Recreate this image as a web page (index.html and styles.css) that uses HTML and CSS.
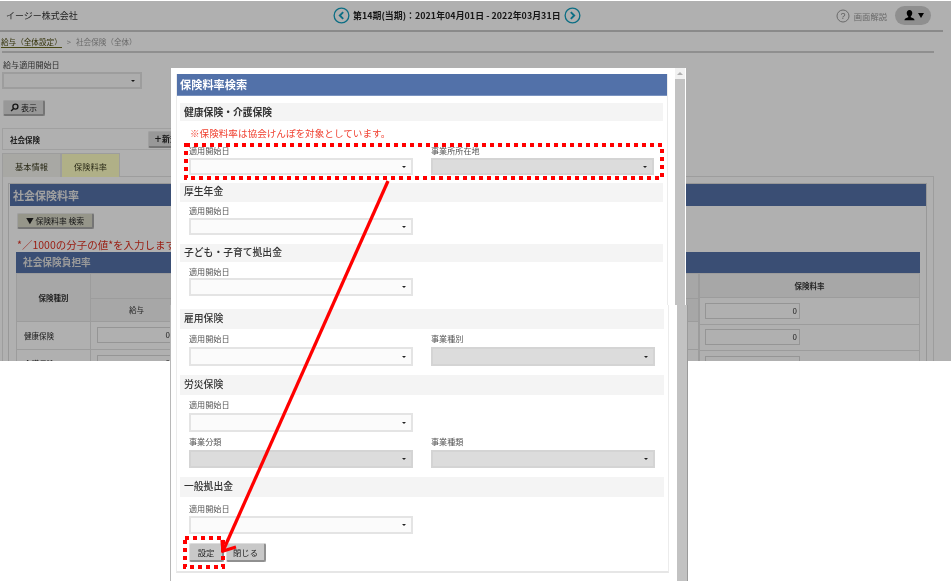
FILE: index.html
```html
<!DOCTYPE html>
<html lang="ja">
<head>
<meta charset="utf-8">
<title>保険料率検索</title>
<link rel="stylesheet" href="styles.css">
</head>
<body>
<div class="app">
  <div class="screen">
    <header class="topbar">
      <div class="company">イージー株式会社</div>
      <div class="period">
        <svg class="nav" viewBox="0 0 18 18"><circle cx="9" cy="9" r="7.8"/><path d="M10.8 5.4 7.2 9l3.6 3.6"/></svg>
        <span>第14期(当期)：2021年04月01日 - 2022年03月31日</span>
        <svg class="nav" viewBox="0 0 18 18"><circle cx="9" cy="9" r="7.8"/><path d="M7.2 5.4 10.8 9l-3.6 3.6"/></svg>
      </div>
      <div class="tools">
        <svg class="help" viewBox="0 0 14 14"><circle cx="7" cy="7" r="6"/><text x="7" y="10" text-anchor="middle">?</text></svg>
        <span class="help-text">画面解説</span>
        <div class="user">
          <svg viewBox="0 0 14 14" class="user-icon"><path d="M7 1c2 0 3 1.500 3 3.400 0 1.500-.8 2.800-1.600 3.400v1c1.700.6 3.800 1.200 4.100 3.200H1.500c.3-2 2.400-2.600 4.100-3.200v-1C4.800 7.200 4 5.900 4 4.400 4 2.500 5 1 7 1z"/></svg>
          <span class="user-caret"></span>
        </div>
      </div>
    </header>

    <nav class="crumb"><a>給与（全体設定）</a><span class="sep">&gt;</span><span>社会保険（全体）</span></nav>

    <div class="filter">
      <div class="filter-label">給与適用開始日</div>
      <div class="sel filter-sel"><i></i></div>
      <button class="btn show-btn"><svg viewBox="0 0 10 10" class="loupe"><circle cx="6" cy="4" r="2.800"/><path d="M4 6 1.200 8.800"/></svg>表示</button>
    </div>

    <div class="card"><span class="card-title">社会保険</span><button class="btn add-btn"><b>＋</b>新規</button></div>

    <div class="tabs"><div class="tab">基本情報</div><div class="tab tab-on">保険料率</div></div>

    <section class="panel">
      <div class="panel-box">
        <h2 class="panel-head">社会保険料率</h2>
        <button class="btn rate-btn">▼ 保険料率 検索</button>
        <p class="hint">*／1000の分子の値*を入力します</p>
        <h3 class="sub-head">社会保険負担率</h3>
        <div class="tables">
          <table class="tbl tbl-left">
            <colgroup><col class="c1"><col class="c2"><col></colgroup>
            <tr class="r1"><th rowspan="2">保険種別</th><th colspan="2"></th></tr>
            <tr class="r2"><th class="th-plain">給与</th><th></th></tr>
            <tr class="r3"><td class="lab">健康保険</td><td colspan="2"><div class="num num-l">0</div></td></tr>
            <tr class="r3"><td class="lab">介護保険</td><td colspan="2"><div class="num num-l">0</div></td></tr>
          </table>
          <table class="tbl tbl-right">
            <tr class="r1"><th>保険料率</th></tr>
            <tr class="r4"><td><div class="num">0</div></td></tr>
            <tr class="r4"><td><div class="num">0</div></td></tr>
            <tr class="r4"><td><div class="num">0</div></td></tr>
          </table>
        </div>
      </div>
    </section>
    <div class="dim"></div>
  </div>

  <div class="modal">
    <div class="frag frag-top">
      <div class="inner">
        <h1 class="modal-title">保険料率検索</h1>
        <div class="modal-body">
          <div class="bar bar-a">健康保険・介護保険</div>
          <p class="note">※保険料率は協会けんぽを対象としています。</p>
          <div class="pair p-a">
            <div class="field"><label>適用開始日</label><div class="sel s17"><i></i></div></div>
            <div class="field f-narrow"><label>事業所所在地</label><div class="sel s17 off"><i></i></div></div>
          </div>
          <div class="bar bar-b">厚生年金</div>
          <div class="pair p-b"><div class="field"><label>適用開始日</label><div class="sel s17"><i></i></div></div></div>
          <div class="bar bar-c">子ども・子育て拠出金</div>
          <div class="pair p-c"><div class="field"><label>適用開始日</label><div class="sel s18"><i></i></div></div></div>
        </div>
      </div>
      <div class="scroll"><span class="scroll-up"></span></div>
    </div>

    <div class="frag frag-bottom">
      <div class="inner inner-b">
        <div class="modal-body">
          <div class="bar bar-d">雇用保険</div>
          <div class="pair p-d">
            <div class="field"><label>適用開始日</label><div class="sel s19"><i></i></div></div>
            <div class="field"><label>事業種別</label><div class="sel s19 off"><i></i></div></div>
          </div>
          <div class="bar bar-d bar-e">労災保険</div>
          <div class="pair p-d"><div class="field"><label>適用開始日</label><div class="sel s19"><i></i></div></div></div>
          <div class="pair p-f">
            <div class="field"><label>事業分類</label><div class="sel s18 off"><i></i></div></div>
            <div class="field"><label>事業種類</label><div class="sel s18 off"><i></i></div></div>
          </div>
          <div class="bar bar-d bar-g">一般拠出金</div>
          <div class="pair p-g"><div class="field"><label>適用開始日</label><div class="sel s18"><i></i></div></div></div>
          <div class="actions"><button class="btn act-set">設定</button><button class="btn act-close">閉じる</button></div>
        </div>
      </div>
      <div class="scroll scroll-b"></div>
    </div>
  </div>

  <svg class="marks" viewBox="0 0 951 581">
    <rect class="dots" x="186" y="145" width="476" height="33"/>
    <rect class="dots" x="185" y="538" width="38" height="29"/>
    <path class="arrow" d="M388 181 223 551"/>
    <path class="arrow" d="M222 540 223 551 236 547"/>
  </svg>
</div>
</body>
</html>
```
FILE: styles.css
```css
* { box-sizing: border-box; }
html, body { margin: 0; padding: 0; background: #fff; }
body { font-family: "Noto Sans CJK JP", "Liberation Sans", sans-serif; color: #2c2c2c; }
h1, h2, h3, p { margin: 0; font-weight: inherit; }
button { font-family: inherit; padding: 0; }

.app { position: relative; width: 951px; height: 581px; overflow: hidden; filter: blur(.35px); }

.screen { position: relative; height: 361px; overflow: hidden; background: #fff; border-top: 1px solid #fff; }
.dim { position: absolute; inset: 0; background: rgba(0, 0, 0, .31); }

.topbar { display: flex; align-items: center; height: 31px; border-bottom: 2px solid #c8c8c8; width: 943px; }
.company { font-size: 9px; margin-left: 6px; width: 327px; color: #333; }
.period { display: flex; align-items: center; gap: 3px; font-size: 8.900px; font-weight: 700; color: #222; white-space: nowrap; }
.period span { letter-spacing: .05px; }
.nav { width: 17px; height: 17px; fill: none; stroke: #12a0c0; stroke-width: 1.400; }
.nav path { stroke-width: 2; }
.tools { display: flex; align-items: center; margin-left: auto; margin-right: 12px; }
.help { width: 14px; height: 14px; fill: none; stroke: #9a9a9a; stroke-width: 1; }
.help text { fill: #888; stroke: none; font-size: 9px; font-family: "Liberation Sans", sans-serif; }
.help-text { font-size: 8.300px; color: #999; margin-left: 4px; }
.user { display: flex; align-items: center; justify-content: center; gap: 2px; width: 36px; height: 19px; border-radius: 10px; background: #d0d0d0; margin-left: 8px; }
.user-icon { width: 13px; height: 13px; fill: #000; }
.user-caret { border: 3.500px solid transparent; border-top: 5px solid #000; border-bottom: 0; }

.crumb { display: flex; align-items: center; gap: 4px; height: 21px; width: 932px; margin-left: 2px; border-bottom: 2px solid #cfcfcf; font-size: 7.600px; color: #9a9a9a; }
.crumb a { color: #4c4a10; border-bottom: 1px solid #6b691e; margin-left: -1px; }
.sep { margin: 0 1px; }

.filter { padding: 6px 0 0 2px; }
.filter-label { font-size: 8.100px; height: 13px; line-height: 11px; margin-left: 1px; color: #444; }
.filter-sel { width: 140px; height: 17px; }
.show-btn { display: flex; align-items: center; justify-content: center; gap: 2px; width: 42px; height: 16px; margin: 11px 0 0 1px; font-size: 8px; }
.loupe { width: 9px; height: 9px; fill: none; stroke: #222; stroke-width: 1.500; }

.sel { position: relative; background: #fbfbfb; border: 2px solid #e4e4e4; }
.sel i { position: absolute; right: 5px; top: 50%; margin-top: -1px; border: 2px solid transparent; border-top: 2.500px solid #222; border-bottom: 0; }
.sel.off { background: #dcdcdc; border-color: #d4d4d4; }
.s17 { height: 17px; }
.s18 { height: 18px; }
.s19 { height: 19px; }

.btn { background: #dcdcdc; border: 1px solid #e8e8e8; border-right: 2px solid #aaa; border-bottom: 2px solid #aaa; border-radius: 2px; color: #222; }

.card { display: flex; align-items: center; width: 300px; height: 22px; margin: 12px 0 0 2px; border: 1px solid #e8e8e8; font-size: 7.500px; font-weight: 700; }
.card-title { margin-left: 7px; width: 138px; }
.add-btn { width: 60px; height: 17px; font-size: 8px; font-weight: 700; text-align: left; padding-left: 5px; }
.add-btn b { font-size: 8px; }

.tabs { display: flex; margin: 3px 0 0 2px; height: 24px; }
.tab { width: 59px; height: 24px; display: flex; align-items: center; justify-content: center; font-size: 8.200px; background: #f4f4ee; border: 1px solid #e4e4e4; border-bottom: 0; color: #3c3c20; }
.tab-on { background: #ffffc4; }

.panel { width: 932px; height: 200px; margin: -1px 0 0 2px; border: 1px solid #e4e4e4; padding: 6px 6px 0 5px; }
.panel-box { height: 200px; border: 1px solid #dcdcdc; border-bottom: 0; }
.panel-head { height: 22px; line-height: 22px; background: #5471a8; color: #e8e8e8; font-size: 11px; font-weight: 700; padding-left: 3px; margin-left: 1px; }
.rate-btn { display: block; width: 77px; height: 16px; margin: 7px 0 0 8px; font-size: 7.800px; background: #d9d9c8; white-space: nowrap; }
.hint { font-size: 10.500px; line-height: 14px; color: #e03020; margin: 9px 0 0 8px; white-space: nowrap; }
.sub-head { height: 21px; line-height: 21px; width: 904px; margin-left: 7px; background: #5471a8; color: #e0e0e0; font-size: 9.700px; font-weight: 700; padding-left: 7px; }

.tables { display: flex; width: 904px; margin-left: 7px; }
.tbl { border-collapse: collapse; table-layout: fixed; font-size: 7.500px; }
.tbl th, .tbl td { border: 1px solid #e2e2e2; padding: 0; text-align: center; font-weight: 400; }
.tbl th { background: #f2f2f2; font-weight: 700; color: #333; }
.tbl th.th-plain { font-weight: 400; }
.tbl-left { width: 683px; flex: none; }
.tbl-right { width: 221px; flex: none; }
.c1 { width: 74px; }
.c2 { width: 92px; }
.r1 { height: 24px; }
.r2 { height: 23px; }
.r3 { height: 27px; }
.r4 { height: 26.500px; }
.tbl td.lab { background: #fff; text-align: left; padding-left: 7px; }
.num { width: 95px; height: 16px; margin-left: 5px; border: 1px solid #d8d8d8; text-align: right; padding-right: 2px; font-size: 8px; line-height: 14px; color: #333; background: #fff; }
.num-l { width: 76px; margin-left: 6px; }

.modal { position: absolute; left: 171px; top: 68px; width: 518px; height: 513px; display: grid; grid-template-rows: 237px 276px; }
.frag { display: flex; background: #fff; }
.frag-top { width: 515px; padding: 6px 0 0 5px; }
.frag-bottom { width: 518px; padding-left: 5px; border-left: 1px solid #b8b8b8; border-right: 1px solid #9a9a9a; margin-left: -1px; }
.inner { width: 492px; border-left: 1px solid #ececec; border-right: 1px solid #ececec; flex: none; }
.inner-b { width: 493px; height: 268px; border-bottom: 2px solid #e6e6e6; }
.modal-title { height: 22px; line-height: 21px; background: #5271a9; color: #fff; font-size: 11.200px; font-weight: 700; padding-left: 3px; border-bottom: 1px solid #7a93c0; }
.modal-body { padding-left: 3px; }

.bar { width: 483px; padding-left: 4px; background: #f4f4f4; font-size: 9.800px; font-weight: 500; color: #333; }
.bar-a { height: 18px; line-height: 18px; margin-top: 7px; font-weight: 700; }
.bar-b { height: 19px; line-height: 17px; margin-top: 8px; }
.bar-c { height: 18px; line-height: 17px; margin-top: 9px; }
.bar-d { width: 484px; height: 20px; line-height: 19px; margin-top: 4px; }
.bar-e { margin-top: 9px; }
.bar-g { margin-top: 9px; }
.note { font-size: 9.600px; line-height: 12px; margin: 6px 0 0 10px; color: #f04030; white-space: nowrap; }

.pair { display: flex; gap: 18px; margin-left: 9px; }
.field { width: 224px; flex: none; }
.f-narrow { width: 223px; }
.field label { display: block; height: 11px; line-height: 10px; font-size: 8.100px; color: #555; margin: 0 0 1px 0; }
.p-a { margin-top: 7px; }
.p-b { margin-top: 4px; }
.p-c { margin-top: 5px; }
.p-c label { margin-bottom: 0; }
.p-d { margin-top: 5px; }
.p-d label { margin-bottom: 2px; }
.p-f { margin-top: 5px; }
.p-f label { margin-bottom: 2px; }
.p-g { margin-top: 7px; }

.actions { display: flex; gap: 2px; margin: 9px 0 0 9px; }
.act-set, .act-close { height: 19px; font-size: 8.300px; background: #c8c8c8; border-color: #ddd #909090 #909090 #ddd; border-width: 1px 2px 2px 1px; border-style: solid; }
.act-set { width: 35px; }
.act-close { width: 40px; }

.scroll { position: relative; width: 10px; margin-left: 7px; background: #c2c2c2; margin-top: -6px; flex: none; }
.scroll-up { display: block; height: 11px; background: #f1f1f1; position: relative; }
.scroll-up::after { content: ""; position: absolute; left: 2px; top: 4px; border: 3px solid transparent; border-bottom: 3px solid #b0b0b0; border-top: 0; }
.scroll-b { margin-top: 0; margin-left: 8px; }

.marks { position: absolute; left: 0; top: 0; width: 951px; height: 581px; pointer-events: none; }
.dots { fill: none; stroke: #f00; stroke-width: 4; stroke-dasharray: 4 4; }
.arrow { fill: none; stroke: #f00; stroke-width: 3.300; }
```
